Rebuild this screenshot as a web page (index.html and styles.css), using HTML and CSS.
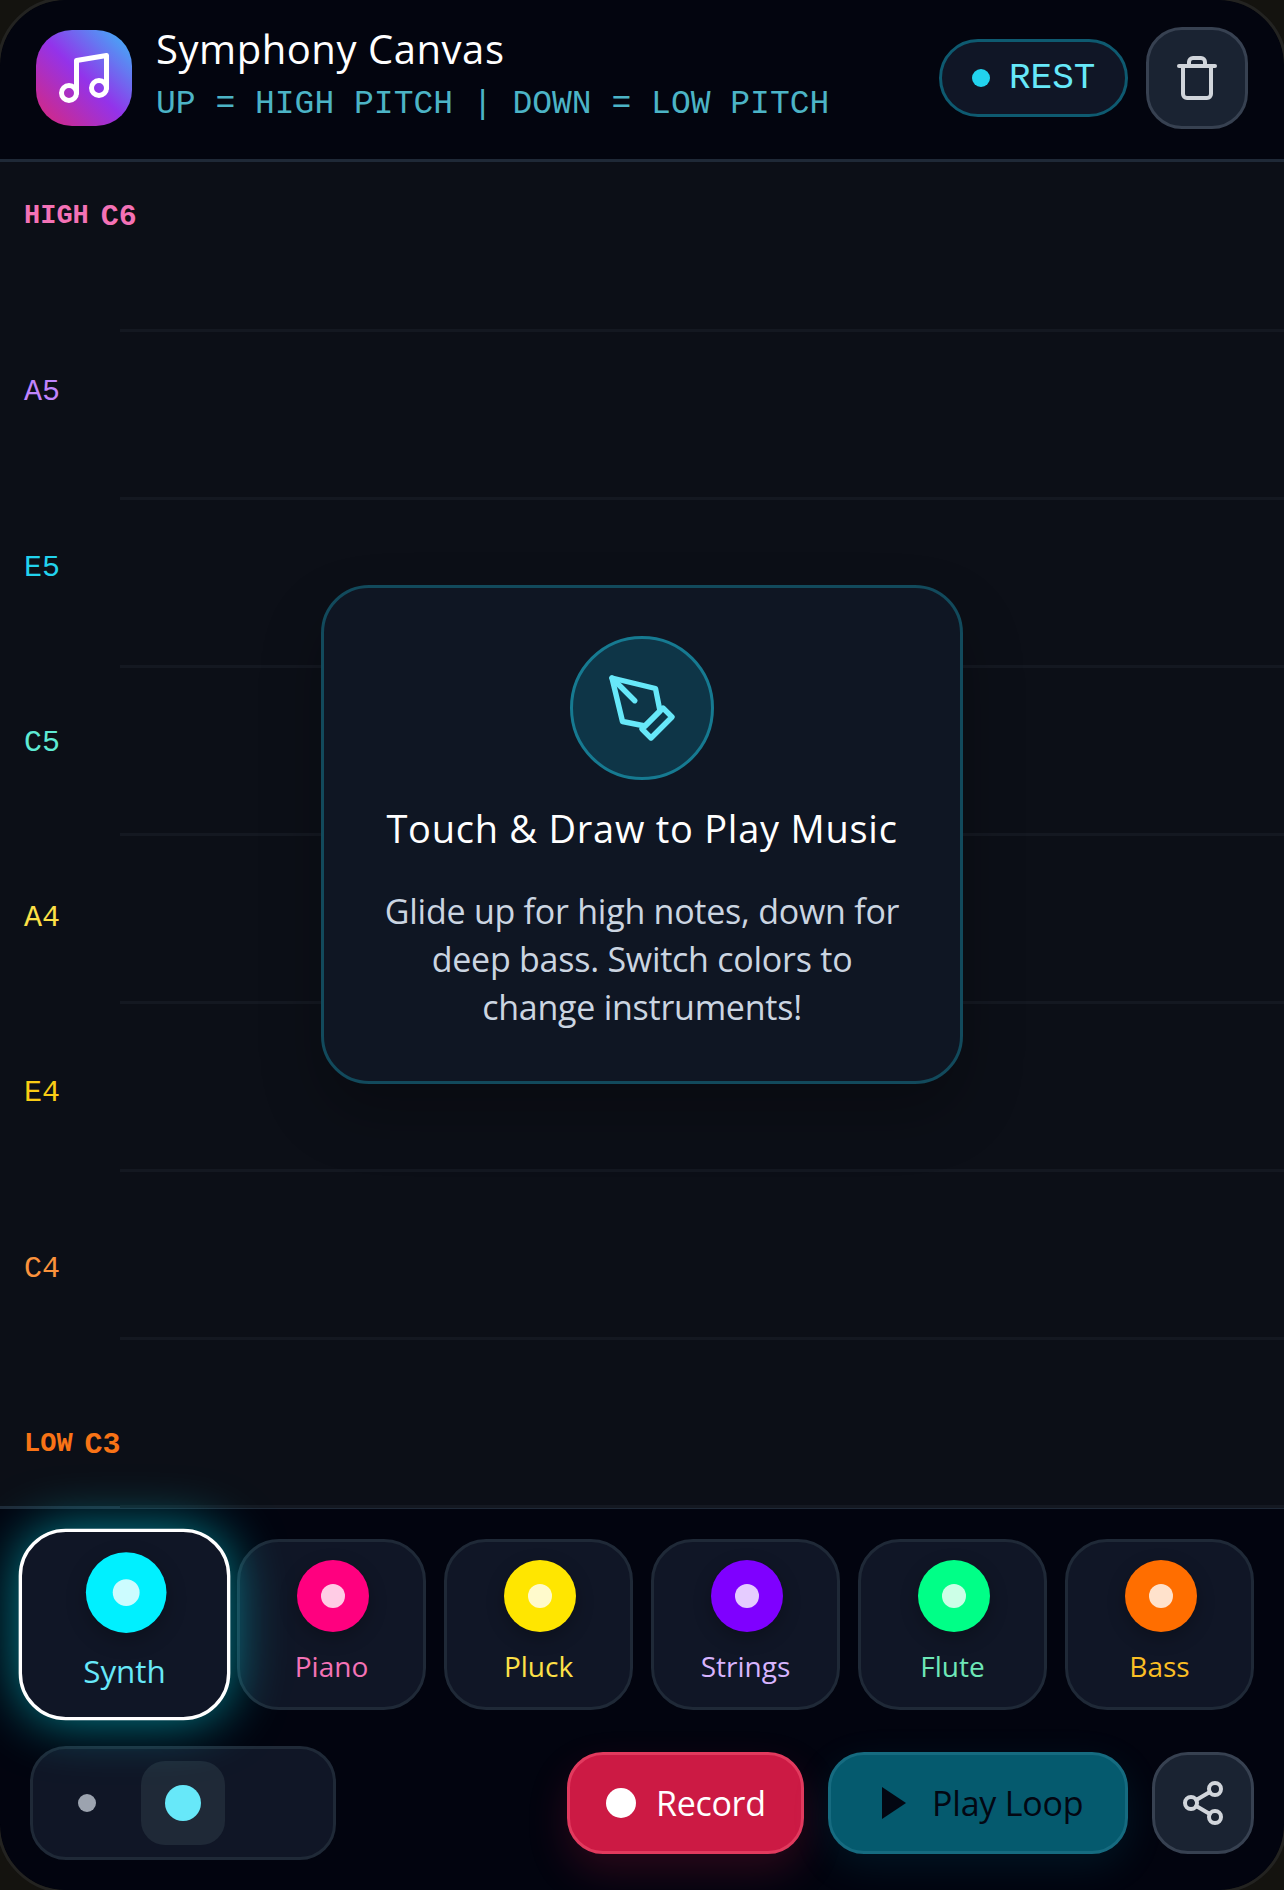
FILE: index.html
```html
<!DOCTYPE html>
<html lang="en">

<head>
    <meta charset="UTF-8">
    <meta name="viewport" content="width=device-width, initial-scale=1.0">
    <title>Symphony Canvas</title>
    <link rel="stylesheet" href="styles.css">
</head>

<body>
    <div class="app">
        <header class="header">
            <div class="logo">
                <svg class="logo-icon" viewBox="0 0 24 24">
                    <path d="M9 18V5l12-2v13" />
                    <circle cx="6" cy="18" r="3" />
                    <circle cx="18" cy="16" r="3" />
                </svg>
            </div>
            <div class="brand">
                <h1>Symphony Canvas</h1>
                <p>UP = HIGH PITCH | DOWN = LOW PITCH</p>
            </div>
            <div class="status"><span class="status-dot"></span>REST</div>
            <button class="icon-btn">
                <svg class="icon" viewBox="0 0 24 24">
                    <path d="M3 6h18" />
                    <path d="M5 6v14a2 2 0 0 0 2 2h10a2 2 0 0 0 2-2V6" />
                    <path d="M8 6V4a2 2 0 0 1 2-2h4a2 2 0 0 1 2 2v2" />
                </svg>
            </button>
        </header>

        <main class="canvas">
            <div class="lane"></div>
            <div class="lane"></div>
            <div class="lane"></div>
            <div class="lane"></div>
            <div class="lane"></div>
            <div class="lane"></div>
            <div class="lane"></div>
            <div class="lane"></div>

            <div class="notes">
                <div class="note note-c6"><small>HIGH</small>C6</div>
                <div class="note note-a5">A5</div>
                <div class="note note-e5">E5</div>
                <div class="note note-c5">C5</div>
                <div class="note note-a4">A4</div>
                <div class="note note-e4">E4</div>
                <div class="note note-c4">C4</div>
                <div class="note note-c3"><small>LOW</small>C3</div>
            </div>

            <div class="hint">
                <div class="hint-icon">
                    <svg viewBox="0 0 24 24">
                        <path d="M12 19l7-7 3 3-7 7-3-3z" />
                        <path d="M18 13l-1.5-7.5L2 2l3.5 14.5L13 18l5-5z" />
                        <path d="M2 2l7.586 7.586" />
                    </svg>
                </div>
                <h2>Touch &amp; Draw to Play Music</h2>
                <p>Glide up for high notes, down for deep bass. Switch colors to change instruments!</p>
            </div>
        </main>

        <footer class="footer">
            <div class="instruments">
                <button class="instrument synth active"><span class="disc"><i></i></span><span class="name">Synth</span></button>
                <button class="instrument piano"><span class="disc"><i></i></span><span class="name">Piano</span></button>
                <button class="instrument pluck"><span class="disc"><i></i></span><span class="name">Pluck</span></button>
                <button class="instrument strings"><span class="disc"><i></i></span><span class="name">Strings</span></button>
                <button class="instrument flute"><span class="disc"><i></i></span><span class="name">Flute</span></button>
                <button class="instrument bass"><span class="disc"><i></i></span><span class="name">Bass</span></button>
            </div>

            <div class="controls">
                <div class="sizes">
                    <button class="size"><span class="size-dot small"></span></button>
                    <button class="size selected"><span class="size-dot medium"></span></button>
                    <button class="size"></button>
                </div>
                <div class="actions">
                    <button class="action record"><span class="record-dot"></span>Record</button>
                    <button class="action play">
                        <svg class="play-icon" viewBox="0 0 24 32"><polygon points="0,0 24,16 0,32" /></svg>Play Loop
                    </button>
                    <button class="icon-btn">
                        <svg class="icon" viewBox="0 0 24 24">
                            <circle cx="18" cy="5" r="3" />
                            <circle cx="6" cy="12" r="3" />
                            <circle cx="18" cy="19" r="3" />
                            <path d="M8.59 13.51l6.83 3.98" />
                            <path d="M15.41 6.51l-6.82 3.98" />
                        </svg>
                    </button>
                </div>
            </div>
        </footer>
    </div>
</body>

</html>
```

FILE: styles.css
```css
:root {
    --line: #1f2937;
    --panel: #101626;
    --cyan: #67e8f9;
    --sans: 'Open Sans', 'Liberation Sans', sans-serif;
    --mono: 'Liberation Mono', 'DejaVu Sans Mono', monospace;
}

* {
    box-sizing: border-box;
    margin: 0;
    padding: 0;
}

body {
    background: #14130f;
    font-family: var(--sans);
    overflow: hidden;
}

button {
    font-family: inherit;
    background: none;
    border: none;
}

.app {
    height: 1890px;
    border-radius: 66px;
    outline: 3px solid #232321;
    overflow: hidden;
    background: #02040f;
    display: flex;
    flex-direction: column;
}

/* header */
.header {
    height: 162px;
    flex: none;
    display: flex;
    align-items: center;
    padding: 0 36px 3px;
    border-bottom: 3px solid var(--line);
    background: #03050f;
}

.logo {
    width: 96px;
    height: 96px;
    border-radius: 36px;
    display: flex;
    align-items: center;
    justify-content: center;
    background: linear-gradient(to top right, #db2777, #9333ea 50%, #38bdf8);
}

.logo-icon {
    width: 60px;
    height: 60px;
    fill: none;
    stroke: #fff;
    stroke-width: 2;
    stroke-linecap: round;
    stroke-linejoin: round;
}

.brand {
    margin: 0 0 5px 24px;
    flex: 1;
}

.brand h1 {
    font-size: 40px;
    line-height: 48px;
    font-weight: 400;
    color: #fff;
    letter-spacing: 0.55px;
}

.brand p {
    font-family: var(--mono);
    font-size: 33px;
    line-height: 42px;
    color: #4cb4c6;
    margin-top: 11px;
}

.status {
    width: 189px;
    height: 78px;
    border: 3px solid #0e5a70;
    border-radius: 39px;
    background: var(--panel);
    display: flex;
    align-items: center;
    gap: 19px;
    padding-left: 30px;
    font-family: var(--mono);
    font-size: 36px;
    color: var(--cyan);
}

.status-dot {
    width: 18px;
    height: 18px;
    border-radius: 50%;
    background: #22d3ee;
}

.icon-btn {
    width: 102px;
    height: 102px;
    flex: none;
    margin-left: 18px;
    border: 3px solid #374151;
    border-radius: 36px;
    background: #1a2332;
    display: flex;
    align-items: center;
    justify-content: center;
}

.icon {
    width: 48px;
    height: 48px;
    fill: none;
    stroke: #d1d5db;
    stroke-width: 2;
    stroke-linecap: round;
    stroke-linejoin: round;
}

/* drawing area */
.canvas {
    position: relative;
    height: 1344px;
    flex: none;
    display: flex;
    flex-direction: column;
    padding-top: 2px;
    background: #0c0f17;
}

.lane {
    flex: 0 0 168px;
    margin-left: 120px;
    border-bottom: 3px solid #141821;
}

.lane:last-of-type {
    border-bottom: none;
}

.notes {
    position: absolute;
    left: 24px;
    top: 34px;
    bottom: 41px;
    display: flex;
    flex-direction: column;
    justify-content: space-between;
    font-family: var(--mono);
    font-size: 30px;
    line-height: 40px;
}

.note small {
    font-size: 27px;
    font-weight: 700;
    margin-right: 12px;
    vertical-align: 2px;
}

.note-c6 {
    color: #f472b6;
    font-weight: 700;
}

.note-a5 { color: #c084fc; }
.note-e5 { color: #22d3ee; }
.note-c5 { color: #5eead4; }
.note-a4 { color: #fde047; }
.note-e4 { color: #facc15; }
.note-c4 { color: #fb923c; }

.note-c3 {
    color: #f97316;
    font-weight: 700;
}

.hint {
    position: absolute;
    left: 321px;
    top: 423px;
    width: 642px;
    height: 499px;
    padding: 48px 48px 0;
    border: 3px solid #124a5c;
    border-radius: 48px;
    background: #0f1623;
    box-shadow: 0 30px 60px rgba(0, 0, 0, 0.25);
    text-align: center;
}

.hint-icon {
    width: 144px;
    height: 144px;
    margin: 0 auto;
    border: 3px solid #167a91;
    border-radius: 50%;
    background: #0e3547;
    display: flex;
    align-items: center;
    justify-content: center;
}

.hint-icon svg {
    width: 72px;
    height: 72px;
    fill: none;
    stroke: var(--cyan);
    stroke-width: 1.8;
    stroke-linecap: round;
    stroke-linejoin: round;
}

.hint h2 {
    font-size: 38px;
    line-height: 54px;
    font-weight: 400;
    letter-spacing: 0.75px;
    color: #fff;
    margin-top: 21px;
    white-space: nowrap;
}

.hint p {
    font-size: 34px;
    line-height: 48px;
    letter-spacing: -0.25px;
    color: #cbd5e1;
    margin-top: 32px;
}

/* bottom panel */
.footer {
    flex: 1;
    border-top: 3px solid var(--line);
    padding: 30px 30px 0;
    background: #02040f;
}

.instruments {
    display: flex;
    gap: 18px;
}

.instrument {
    flex: 1;
    height: 171px;
    border: 3px solid var(--line);
    border-radius: 42px;
    background: var(--panel);
    padding-top: 18px;
    display: flex;
    flex-direction: column;
    align-items: center;
}

.instrument.active {
    position: relative;
    z-index: 1;
    transform: scale(1.12);
    border-color: #fff;
    box-shadow: 0 0 48px rgba(0, 240, 255, 0.55);
}

.disc {
    width: 72px;
    height: 72px;
    flex: none;
    margin-left: 2px;
    border-radius: 50%;
    display: flex;
    align-items: center;
    justify-content: center;
    box-shadow: 0 6px 18px rgba(0, 0, 0, 0.25);
}

.disc i {
    width: 24px;
    height: 24px;
    border-radius: 50%;
    background: rgba(255, 255, 255, 0.8);
}

.name {
    font-size: 28px;
    line-height: 40px;
    margin-top: 14px;
}

.synth .disc { background: #00f0ff; }
.synth .name { color: var(--cyan); }
.piano .disc { background: #ff007f; }
.piano .name { color: #f472b6; }
.pluck .disc { background: #ffe600; }
.pluck .name { color: #fde047; }
.strings .disc { background: #7f00ff; }
.strings .name { color: #d8b4fe; }
.flute .disc { background: #00ff87; }
.flute .name { color: #6ee7b7; }
.bass .disc { background: #ff6e00; }
.bass .name { color: #fbbf24; }

.controls {
    display: flex;
    align-items: center;
    justify-content: space-between;
    margin-top: 36px;
}

.sizes {
    display: flex;
    gap: 12px;
    padding: 12px;
    border: 3px solid var(--line);
    border-radius: 36px;
    background: var(--panel);
}

.size {
    width: 84px;
    height: 84px;
    border-radius: 24px;
    display: flex;
    align-items: center;
    justify-content: center;
}

.size.selected {
    background: #1f2937;
}

.size-dot {
    border-radius: 50%;
}

.size-dot.small {
    width: 18px;
    height: 18px;
    background: #9ca3af;
}

.size-dot.medium {
    width: 36px;
    height: 36px;
    background: var(--cyan);
}

.actions {
    display: flex;
    align-items: center;
    gap: 24px;
}

.actions .icon-btn {
    margin-left: 0;
}

.action {
    height: 102px;
    border-radius: 36px;
    border: 3px solid;
    display: flex;
    align-items: center;
    font-size: 34px;
}

.record {
    width: 237px;
    padding-left: 36px;
    gap: 20px;
    letter-spacing: -0.3px;
    color: #fff;
    background: #cc1a44;
    border-color: #e23a5e;
    box-shadow: 0 18px 40px rgba(225, 29, 72, 0.18);
}

.record-dot {
    width: 30px;
    height: 30px;
    border-radius: 50%;
    background: #fff;
}

.play {
    width: 300px;
    padding-left: 51px;
    gap: 26px;
    letter-spacing: -0.2px;
    color: #030712;
    background: #055a6e;
    border-color: #166b80;
    box-shadow: 0 12px 40px rgba(6, 182, 212, 0.1);
}

.play-icon {
    width: 24px;
    height: 32px;
    fill: #030712;
}
```
